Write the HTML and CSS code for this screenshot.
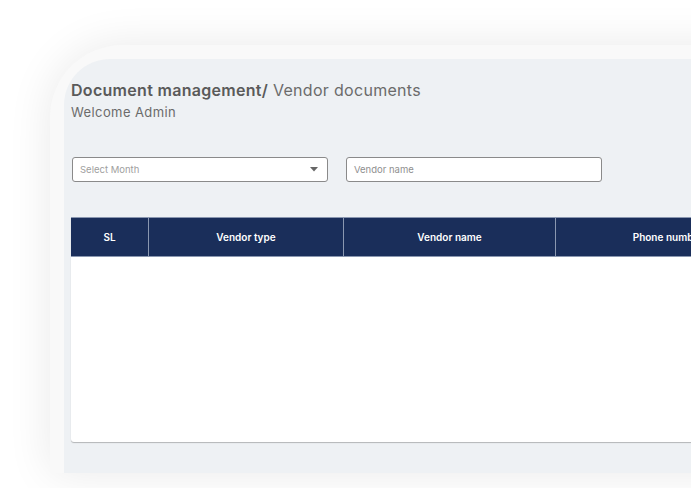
FILE: index.html
```html
<!DOCTYPE html>
<html>
<head>
<meta charset="utf-8">
<link rel="stylesheet" href="styles.css">
</head>
<body>
<div class="stage">
  <div class="frame">
    <div class="screen">
      <div class="heading">
        <h1 class="title"><span class="title-strong">Document management/</span> Vendor documents</h1>
        <p class="welcome">Welcome Admin</p>
      </div>
      <div class="filters">
        <div class="field select">
          <span class="placeholder">Select Month</span>
          <svg class="caret" width="8" height="5" viewBox="0 0 8 5"><path d="M0 0 L8 0 L4 4.5 Z" fill="#666"/></svg>
        </div>
        <div class="field input">
          <span class="placeholder dark">Vendor name</span>
        </div>
      </div>
      <div class="table">
        <div class="thead">
          <div class="th c-sl">SL</div>
          <div class="th c-type">Vendor type</div>
          <div class="th c-name">Vendor name</div>
          <div class="th c-phone">Phone number</div>
        </div>
        <div class="tbody"></div>
      </div>
    </div>
  </div>
</div>
</body>
</html>
```

FILE: styles.css
```css
html, body {
  margin: 0;
  padding: 0;
  background: #ffffff;
  overflow: hidden;
  width: 691px;
  height: 488px;
}
.stage {
  padding: 45px 0 0 50px;
  width: 800px;
}
.frame {
  background: #f9f9f9;
  border-radius: 72px 0 0 0;
  padding: 14px 0 0 14px;
  height: 414px;
  box-shadow: 0 0 45px rgba(0, 0, 0, 0.09);
}
.screen {
  background: #eef1f4;
  border-radius: 46px 0 0 0;
  height: 414px;
  padding: 19px 0 0 7px;
  box-sizing: border-box;
  font-family: "Inter", "Open Sans", sans-serif;
}
.heading {
  color: #666;
}
.title {
  margin: 0;
  font-size: 16px;
  line-height: 24px;
  font-weight: 400;
  color: #6b6b6b;
  letter-spacing: 0.3px;
}
.title-strong {
  font-weight: 600;
  color: #5a5a5a;
}
.welcome {
  margin: 0;
  font-size: 13px;
  line-height: 20px;
  color: #6b6b6b;
  letter-spacing: 0.4px;
}
.filters {
  display: flex;
  gap: 18px;
  margin-top: 35px;
  padding-left: 1px;
}
.field {
  width: 256px;
  height: 25px;
  box-sizing: border-box;
  background: #fff;
  border: 1px solid #8a8a8a;
  border-radius: 3px;
  display: flex;
  align-items: center;
  padding: 0 0 0 7px;
}
.input {
  width: 256px;
}
.select {
  justify-content: space-between;
  padding-right: 9px;
}
.placeholder {
  font-size: 9.5px;
  color: #a0a0a0;
}
.placeholder.dark {
  color: #8f8f8f;
}
.table {
  margin-top: 35px;
  width: 720px;
  background: #fff;
  border-radius: 0 0 0 3px;
  box-shadow: 0 1px 1px rgba(0, 0, 0, 0.25);
}
.thead {
  display: flex;
  height: 40px;
  background: #1a2e5a;
  border-top: 1px solid #8a97b0;
  border-bottom: 1px solid #8a97b0;
  box-sizing: border-box;
}
.th {
  display: flex;
  align-items: center;
  justify-content: center;
  color: #fff;
  font-size: 10px;
  font-weight: 600;
  border-right: 1px solid #8a97b0;
  box-sizing: border-box;
}
.c-sl { width: 78px; }
.c-type { width: 195px; }
.c-name { width: 212px; }
.c-phone { width: 224px; border-right: none; }
.tbody {
  height: 185px;
}
```
